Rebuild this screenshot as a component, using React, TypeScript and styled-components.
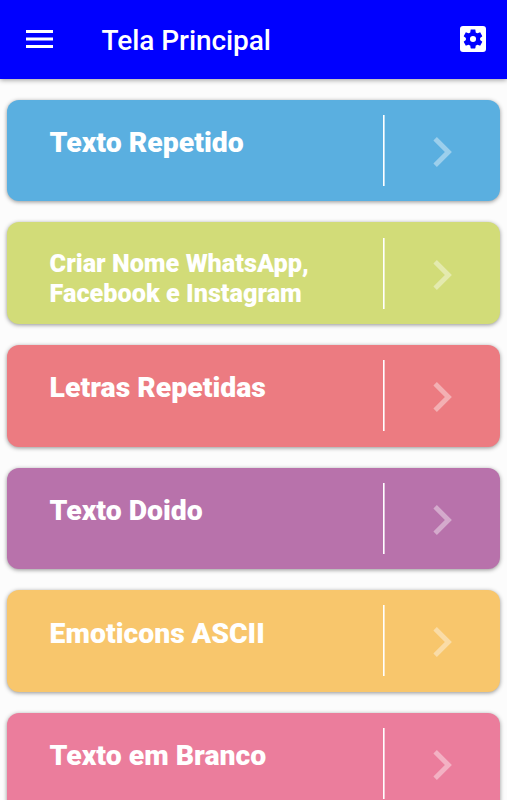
import React from "react";
import styled, { createGlobalStyle } from "styled-components";

const Global = createGlobalStyle`
  * { box-sizing: border-box; }
  html, body { margin: 0; padding: 0; background: #fcfcfc; }
  body { font-family: Roboto, sans-serif; }
`;
const Screen = styled.div`
  height: 100vh;
  display: flex;
  flex-direction: column;
  overflow: hidden;
`;
const AppBar = styled.header`
  flex: none;
  height: 78.8px;
  display: flex;
  align-items: center;
  padding: 0 21px 0 26px;
  background: #0000ff;
  box-shadow: 0 1px 5px rgba(0, 0, 0, 0.4);
`;
const Title = styled.h1`
  flex: 1;
  margin: 3px 0 0 48.6px;
  color: #fff;
  font-size: 28px;
  line-height: 34px;
  font-weight: 500;
  letter-spacing: -0.06px;
`;
const IconButton = styled.button`
  display: flex;
  padding: 0;
  border: 0;
  background: none;
  color: #fff;
`;
const List = styled.main`
  display: flex;
  flex-direction: column;
  gap: 21px;
  padding: 21px 7px 0;
`;
const Card = styled.a<{ $color: string }>`
  flex: none;
  height: 101.6px;
  display: flex;
  align-items: center;
  border-radius: 12px;
  background: ${(p) => p.$color};
  box-shadow: 0 1px 4px rgba(0, 0, 0, 0.42);
  color: #fff;
`;
const Label = styled.span<{ $small?: boolean }>`
  align-self: flex-start;
  width: 333.4px;
  flex: none;
  margin: ${(p) => (p.$small ? "26.3px" : "27.5px")} 0 0 42.6px;
  font-size: ${(p) => (p.$small ? "25.25px" : "28.4px")};
  line-height: ${(p) => (p.$small ? "30px" : "32px")};
  font-weight: 900;
  white-space: pre-line;
`;
const Divider = styled.span`
  flex: none;
  width: 2px;
  height: 71px;
  background: linear-gradient(to right, #fff 50%, rgba(255, 255, 255, 0.6) 50%);
`;
const Arrow = styled.span`
  flex: 1;
  display: flex;
  justify-content: center;
  padding: 3px 0 0;
  opacity: 0.4;
`;

const items = [
  { label: "Texto Repetido", color: "#5aafe0" },
  { label: "Criar Nome WhatsApp,\nFacebook e Instagram", color: "#d2dc78", small: true },
  { label: "Letras Repetidas", color: "#ec7b81" },
  { label: "Texto Doido", color: "#b872ab" },
  { label: "Emoticons ASCII", color: "#f8c66c" },
  { label: "Texto em Branco", color: "#eb7d9c" },
];

export default function App() {
  return (
    <Screen>
      <Global />
      <AppBar>
        <IconButton aria-label="Menu">
          <svg width="27" height="19" viewBox="0 0 27 19" fill="currentColor">
            <path d="M0 0h27v3H0zM0 7.5h27v3H0zM0 15h27v3H0z" />
          </svg>
        </IconButton>
        <Title>Tela Principal</Title>
        <IconButton aria-label="Configurações">
          <svg width="26" height="26" viewBox="0 0 26 26">
            <rect width="26" height="26" rx="3" fill="#fff" />
            <g transform="translate(-1.7 -1.7) scale(1.225)">
              <path fill="#0000ff" d="M19.14 12.94c.04-.3.06-.61.06-.94s-.02-.64-.07-.94l2.03-1.58c.18-.14.23-.41.12-.61l-1.92-3.32c-.12-.22-.37-.29-.59-.22l-2.39.96c-.5-.38-1.03-.7-1.62-.94l-.36-2.54c-.04-.24-.24-.41-.48-.41h-3.84c-.24 0-.43.17-.47.41l-.36 2.54c-.59.24-1.13.57-1.62.94l-2.39-.96c-.22-.08-.47 0-.59.22L2.74 8.87c-.12.21-.08.47.12.61l2.03 1.58c-.05.3-.09.63-.09.94s.02.64.07.94l-2.03 1.58c-.18.14-.23.41-.12.61l1.92 3.32c.12.22.37.29.59.22l2.39-.96c.5.38 1.03.7 1.62.94l.36 2.54c.05.24.24.41.48.41h3.84c.24 0 .44-.17.47-.41l.36-2.54c.59-.24 1.13-.56 1.62-.94l2.39.96c.22.08.47 0 .59-.22l1.92-3.32c.12-.22.07-.47-.12-.61l-2.01-1.58z" transform="translate(12 12) scale(.81) translate(-12 -12)" />
              <circle cx="12" cy="12" r="2.5" fill="#fff" />
            </g>
          </svg>
        </IconButton>
      </AppBar>
      <List>
        {items.map((it) => (
          <Card key={it.label} $color={it.color}>
            <Label $small={it.small}>{it.label}</Label>
            <Divider />
            <Arrow>
              <svg width="19" height="30" viewBox="0 0 19 30" fill="currentColor">
                <path d="M3.9 0L0.4 3.5 11.9 15 0.4 26.5 3.9 30 18.9 15z" />
              </svg>
            </Arrow>
          </Card>
        ))}
      </List>
    </Screen>
  );
}
